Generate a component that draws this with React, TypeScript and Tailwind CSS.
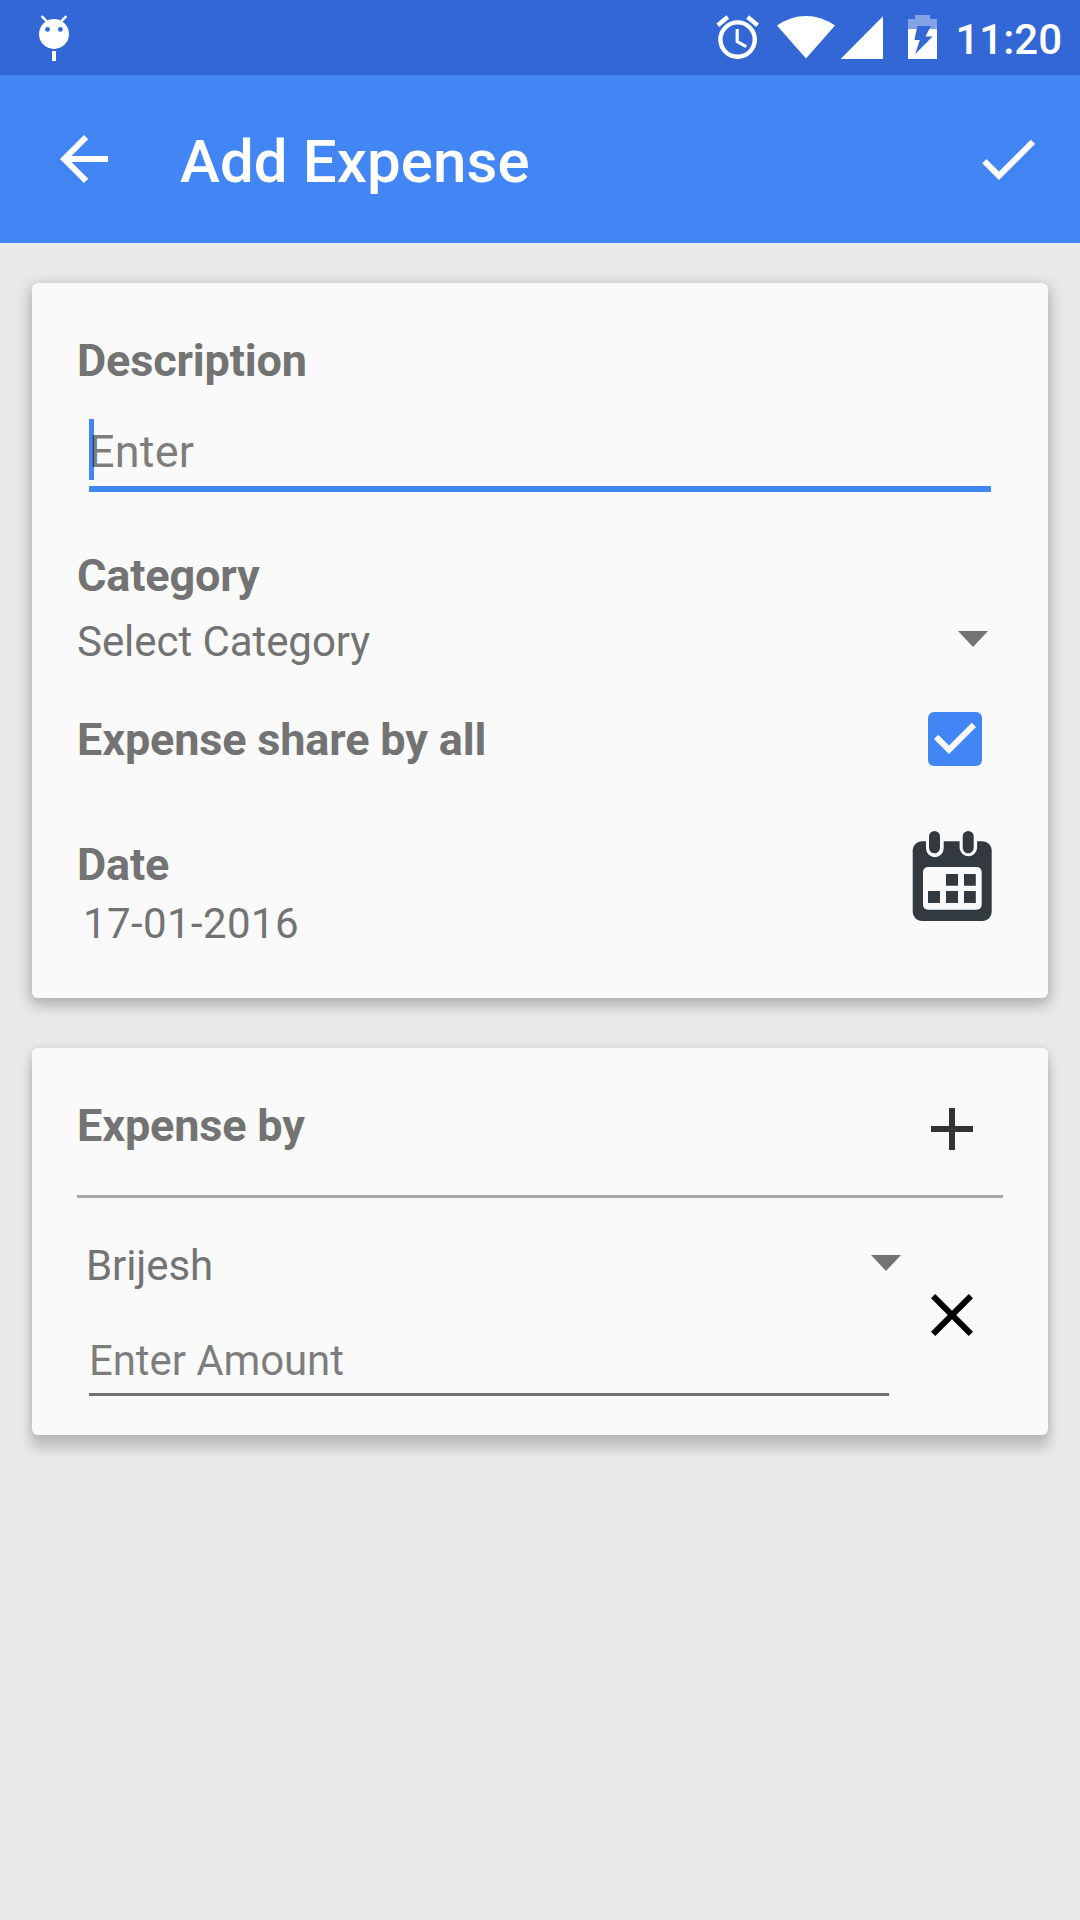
import type { ReactNode } from "react";

function StatusIcons() {
  return (
    <svg width="224" height="50" viewBox="716 12 224 50" fill="#fff">
      <circle cx="737.6" cy="39.6" r="17.2" fill="none" stroke="#fff" strokeWidth="4.4" />
      <path d="M737.2 29v12.6l9 5" fill="none" stroke="#fff" strokeWidth="3.2" />
      <path d="M717.8 25.2l10-8.2M757.6 25.2l-10-8.2" stroke="#fff" strokeWidth="4.4" />
      <path d="M777 25.6A48.5 48.5 0 0 1 835 25.6L806 58.6Z" />
      <path d="M840.6 59L883 16.2V59Z" />
      <path d="M908 29V19h7v-4h15v4h7v10Z" fillOpacity="0.4" />
      <path d="M908 29h29v30h-29Z" />
      <path d="M917.4 26H931l-5.6 10.5h7.2L915.2 54l4.6-14h-5.4Z" fill="#3367d6" />
    </svg>
  );
}

function DebugIcon() {
  return (
    <svg width="36" height="50" viewBox="36 12 36 50" fill="#fff">
      <circle cx="54" cy="34" r="15" />
      <path d="M41.6 16.2l5 5M66.4 16.2l-5 5" stroke="#fff" strokeWidth="2.4" />
      <path d="M52 51h4v10h-4z" />
      <circle cx="47.5" cy="29.4" r="2.4" fill="#3367d6" />
      <circle cx="60.4" cy="29.4" r="2.4" fill="#3367d6" />
    </svg>
  );
}

function Glyph({ d, className }: { d: string; className: string }) {
  return (
    <svg viewBox="0 0 24 24" className={"size-[72px] shrink-0 " + className} fill="currentColor">
      <path d={d} />
    </svg>
  );
}

function Caret() {
  return (
    <svg width="30" height="16" viewBox="0 0 30 16" fill="#737373">
      <path d="M0 0h30L15 16z" />
    </svg>
  );
}

function CalendarIcon() {
  return (
    <svg width="80" height="91" viewBox="912 831 80 91" fill="#323a3f">
      <rect x="912.7" y="841.3" width="79" height="79.7" rx="9" />
      <g fill="#fafafa">
        <path d="M926 840h17.7v8.3a8.8 8.8 0 0 1-17.7 0zM959.6 840h17.5v8.3a8.8 8.8 0 0 1-17.5 0z" />
        <rect x="923" y="867" width="58.7" height="42.7" rx="5" />
      </g>
      <rect x="929" y="831" width="11" height="22.3" rx="5.5" />
      <rect x="962.7" y="831" width="11" height="22.3" rx="5.5" />
      <path d="M946 874h12v11.7h-12zM964 874h11.8v11.7h-11.8zM928 891h12v12h-12zM946 891h12v12h-12zM964 891h11.8v12h-11.8z" />
    </svg>
  );
}

function Label({ children }: { children: ReactNode }) {
  return (
    <div className="h-[53px] text-[45px] leading-[53px] font-bold tracking-[-0.16px]">{children}</div>
  );
}

export default function App() {
  return (
    <div className="flex h-[1920px] w-[1080px] flex-col overflow-hidden bg-[#e9e9e9] font-[Roboto,sans-serif] whitespace-nowrap text-[#737373]">
      <header className="text-white">
        <div className="flex h-[75px] items-start bg-[#3367d6] pt-3 pl-9">
          <DebugIcon />
          <div className="ml-auto flex">
            <StatusIcons />
            <span className="mt-[3px] mr-[18px] ml-[15px] text-[42px] leading-[49px] font-medium">11:20</span>
          </div>
        </div>
        <div className="flex h-[168px] items-start bg-[#4285f4] pt-12 pr-9 pl-12">
          <Glyph className="" d="M20 11H7.83l5.59-5.59L12 4l-8 8 8 8 1.41-1.41L7.83 13H20v-2z" />
          <h1 className="mt-[3px] ml-[60px] text-[60px] leading-[71px] font-medium tracking-[0.1px]">Add Expense</h1>
          <Glyph className="ml-auto" d="M9 16.2L4.8 12l-1.4 1.4L9 19 21 7l-1.4-1.4L9 16.2z" />
        </div>
      </header>

      <main className="flex flex-col gap-[50px] px-8 pt-10">
        <section className="h-[715px] rounded-[6px] bg-[#fafafa] px-[45px] pt-[51px] shadow-[0_5px_14px_2px_rgba(0,0,0,0.26)]">
          <Label>Description</Label>
          <div className="relative mt-8 mr-3 ml-3 h-[73px] border-b-[6px] border-[#4285f4]">
            <div className="absolute top-0 left-0 h-[61px] w-[5px] bg-[#4285f4]" />
            <div className="relative pt-[6px] text-[45px] leading-[53px] tracking-[0.2px] text-black/50">Enter</div>
          </div>
          <div className="mt-[57px]">
            <Label>Category</Label>
          </div>
          <div className="mt-[15px] flex h-[49px] justify-between pr-[15px]">
            <span className="text-[42px] leading-[49px] tracking-[-0.06px]">Select Category</span>
            <span className="mt-[14px]">
              <Caret />
            </span>
          </div>
          <div className="mt-[46px] flex h-[54px] items-start justify-between pr-[21px]">
            <div className="pt-px">
              <Label>Expense share by all</Label>
            </div>
            <div className="flex size-[54px] items-center justify-center rounded-[6px] bg-[#4285f4] text-[#fafafa]">
              <Glyph className="" d="M10 17L5 12l1.41-1.41L10 14.17l7.59-7.59L19 8l-9 9z" />
            </div>
          </div>
          <div className="mt-[65px] flex items-start justify-between pr-[11px]">
            <div className="pt-[7px]">
              <Label>Date</Label>
              <div className="mt-2 ml-[6px] text-[42px] leading-[49px] tracking-[0.4px] [font-kerning:none]">17-01-2016</div>
            </div>
            <CalendarIcon />
          </div>
        </section>

        <section className="h-[387px] rounded-[6px] bg-[#fafafa] px-[45px] shadow-[0_12px_12px_2px_rgba(0,0,0,0.17),0_0_8px_rgba(0,0,0,0.12)]">
          <div className="flex h-[150px] items-start justify-between border-b-[3px] border-[#a7a7a7] pt-[45px] pr-[15px]">
            <div className="pt-[6px]">
              <Label>Expense by</Label>
            </div>
            <Glyph className="text-[#333]" d="M19 13h-6v6h-2v-6H5v-2h6V5h2v6h6v2z" />
          </div>
          <div className="flex justify-between pr-[15px] pl-[9px]">
            <div className="w-[815px]">
              <div className="mt-[43px] flex h-[49px] justify-between">
                <span className="text-[42px] leading-[49px] tracking-[-0.1px]">Brijesh</span>
                <span className="mt-[14px]">
                  <Caret />
                </span>
              </div>
              <div className="mt-[46px] ml-[3px] h-[60px] w-[800px] border-b-[3px] border-[#737373] text-[42px] leading-[49px] tracking-[-0.1px] text-black/50">
                Enter Amount
              </div>
            </div>
            <Glyph
              className="mt-[81px] text-black"
              d="M19 6.41L17.59 5 12 10.59 6.41 5 5 6.41 10.59 12 5 17.59 6.41 19 12 13.41 17.59 19 19 17.59 13.41 12z"
            />
          </div>
        </section>
      </main>
    </div>
  );
}
